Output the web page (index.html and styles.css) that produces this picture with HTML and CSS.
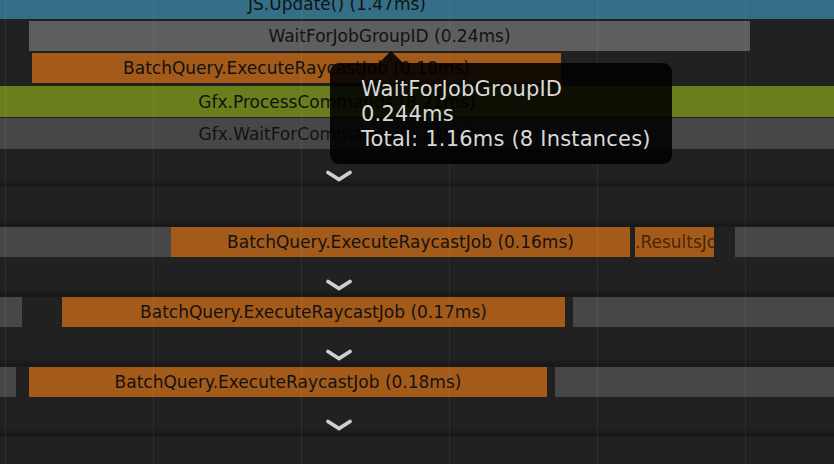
FILE: index.html
```html
<!DOCTYPE html>
<html>
<head>
<meta charset="utf-8">
<title>Profiler Timeline</title>
<link rel="stylesheet" href="styles.css">
</head>
<body>
<div class="timeline">
  <div class="threads">
    <div class="thread">
      <div class="row"><div class="bar blue" style="left:-160px;width:994px">JS.Update() (1.47ms)</div></div>
      <div class="row mt2"><div class="bar gray" style="left:29px;width:721px">WaitForJobGroupID (0.24ms)</div></div>
      <div class="row mt2"><div class="bar orange" style="left:32px;width:529px">BatchQuery.ExecuteRaycastJob (0.18ms)</div></div>
      <div class="row tall mt3"><div class="bar green" style="left:-160px;width:994px">Gfx.ProcessCommands (8.21ms)</div></div>
      <div class="row tall mt1"><div class="bar dgray" style="left:-160px;width:994px">Gfx.WaitForCommands (8.21ms)</div></div>
      <div class="space short">
        <svg class="chev" width="28" height="14" viewBox="0 0 28 14"><polyline points="3,3.5 14,10.5 25,3.5"/></svg>
      </div>
      <div class="sep"></div>
    </div>
    <div class="thread">
      <div class="space"></div>
      <div class="sep"></div>
    </div>
    <div class="thread">
      <div class="row">
        <div class="bar dgray" style="left:-40px;width:211px"></div>
        <div class="bar orange" style="left:171px;width:459px">BatchQuery.ExecuteRaycastJob (0.16ms)</div>
        <div class="bar orange left dim" style="left:635px;width:79px">.ResultsJob</div>
        <div class="bar dgray" style="left:735px;width:140px"></div>
      </div>
      <div class="space">
        <svg class="chev" width="28" height="14" viewBox="0 0 28 14"><polyline points="3,3.5 14,10.5 25,3.5"/></svg>
      </div>
      <div class="sep"></div>
    </div>
    <div class="thread">
      <div class="row">
        <div class="bar dgray" style="left:-40px;width:62px"></div>
        <div class="bar orange" style="left:62px;width:503px">BatchQuery.ExecuteRaycastJob (0.17ms)</div>
        <div class="bar dgray" style="left:573px;width:300px"></div>
      </div>
      <div class="space">
        <svg class="chev" width="28" height="14" viewBox="0 0 28 14"><polyline points="3,3.5 14,10.5 25,3.5"/></svg>
      </div>
      <div class="sep"></div>
    </div>
    <div class="thread">
      <div class="row">
        <div class="bar dgray" style="left:-40px;width:56px"></div>
        <div class="bar orange" style="left:29px;width:518px">BatchQuery.ExecuteRaycastJob (0.18ms)</div>
        <div class="bar dgray" style="left:555px;width:320px"></div>
      </div>
      <div class="space">
        <svg class="chev" width="28" height="14" viewBox="0 0 28 14"><polyline points="3,3.5 14,10.5 25,3.5"/></svg>
      </div>
      <div class="sep"></div>
    </div>
    <div class="thread">
      <div class="space"></div>
    </div>
  </div>
  <div class="grid"></div>
  <div class="tooltip">
    <div>WaitForJobGroupID</div>
    <div>0.244ms</div>
    <div>Total: 1.16ms (8 Instances)</div>
  </div>
</div>
</body>
</html>
```

FILE: styles.css
```css
* { box-sizing: border-box; }
html, body { margin: 0; padding: 0; background: #212121; }

.timeline {
  position: relative;
  width: 834px;
  height: 464px;
  overflow: hidden;
  background: #212121;
  font-family: "DejaVu Sans", "Liberation Sans", sans-serif;
}

.threads {
  display: flex;
  flex-direction: column;
  margin-top: -11px;
}

.thread {
  display: flex;
  flex-direction: column;
  flex: none;
}

.row {
  position: relative;
  height: 30px;
  flex: none;
}
.row.tall { height: 31px; }
.mt1 { margin-top: 1px; }
.mt2 { margin-top: 2px; }
.mt3 { margin-top: 3px; }

.bar {
  position: absolute;
  top: 0;
  bottom: 0;
  display: flex;
  align-items: center;
  justify-content: center;
  overflow: hidden;
  white-space: nowrap;
  font-size: 17px;
  color: #121212;
}
.bar.left { justify-content: flex-start; }
.bar.dim { color: rgba(0, 0, 0, 0.6); }

.blue { background: #346e87; }
.gray { background: #5e5e5e; }
.dgray { background: #474747; }
.orange { background: #a45b19; }
.green { background: #6a7e1c; }

.space {
  height: 36px;
  flex: none;
  display: flex;
  align-items: flex-end;
  padding-left: 325px;
  padding-bottom: 1px;
  background: linear-gradient(to bottom, #212121 calc(100% - 6px), #1c1c1c 100%);
}
.space.short { height: 34px; padding-bottom: 0; }

.sep {
  height: 4px;
  flex: none;
  background: #191919;
}

.chev { display: block; }
.chev polyline {
  fill: none;
  stroke: #cfcfcf;
  stroke-width: 3.8;
  stroke-linecap: round;
  stroke-linejoin: miter;
}

.grid {
  position: absolute;
  inset: 0;
  pointer-events: none;
  background-image: linear-gradient(to right, rgba(255, 255, 255, 0.06) 1px, transparent 1px);
  background-size: 148px 100%;
  background-position: 5px 0;
}

.tooltip {
  position: absolute;
  left: 330px;
  top: 63px;
  width: 342px;
  height: 101px;
  padding: 14px 0 0 31px;
  border-radius: 9px;
  background: rgba(0, 0, 0, 0.88);
  color: #d9d9d9;
  font-size: 21px;
  line-height: 25px;
  letter-spacing: 0.2px;
  white-space: nowrap;
}
.tooltip::before {
  content: "";
  position: absolute;
  left: 49px;
  top: -12px;
  border-left: 12px solid transparent;
  border-right: 12px solid transparent;
  border-bottom: 12px solid rgba(0, 0, 0, 0.88);
}
```
